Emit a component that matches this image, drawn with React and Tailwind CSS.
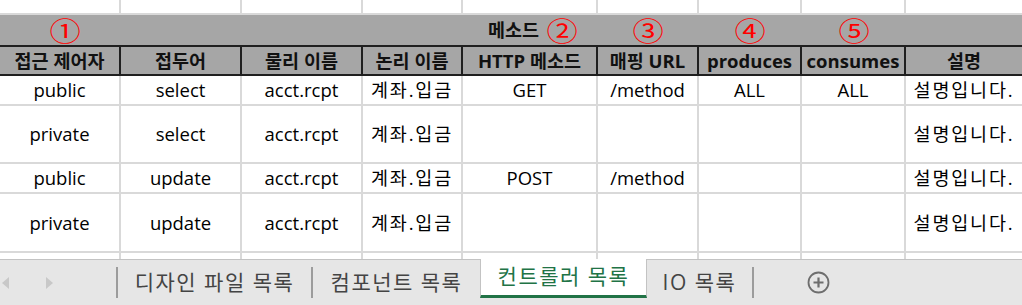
import React from "react";

// column widths follow the sheet's gridlines
const COLS = [
  "w-[121px]",
  "w-[121px]",
  "w-[121px]",
  "w-[100px]",
  "w-[135px]",
  "w-[101px]",
  "w-[103px]",
  "w-[104px]",
  "w-[118px]",
];

const HEADERS = [
  "접근 제어자",
  "접두어",
  "물리 이름",
  "논리 이름",
  "HTTP 메소드",
  "매핑 URL",
  "produces",
  "consumes",
  "설명",
];

const ROWS = [
  { h: "h-[30px]", cells: ["public", "select", "acct.rcpt", "계좌.입금", "GET", "/method", "ALL", "ALL", "설명입니다."] },
  { h: "h-[58px]", cells: ["private", "select", "acct.rcpt", "계좌.입금", "", "", "", "", "설명입니다."] },
  { h: "h-[30px]", cells: ["public", "update", "acct.rcpt", "계좌.입금", "POST", "/method", "", "", "설명입니다."] },
  { h: "h-[59px]", cells: ["private", "update", "acct.rcpt", "계좌.입금", "", "", "", "", "설명입니다."] },
];

const hasHangul = (s) => /[가-힣]/.test(s || "");

function Circled({ children, className = "" }) {
  return (
    <span
      className={`inline-block scale-x-[1.2] font-['Noto_Sans_CJK_KR',sans-serif] text-[26px] leading-none text-[#ff0000] ${className}`}
    >
      {children}
    </span>
  );
}

function GridRow({ h, cells }) {
  return (
    <div className={`flex ${h} border-b-2 border-[#d9d9d9]`}>
      {COLS.map((w, i) => {
        const text = cells ? cells[i] : "";
        return (
          <div
            key={i}
            className={`${w} shrink-0 flex items-center justify-center border-r-2 border-[#d9d9d9] whitespace-nowrap ${
              hasHangul(text) ? "tracking-[1.8px]" : ""
            }`}
          >
            {text}
          </div>
        );
      })}
    </div>
  );
}

function Separator() {
  return <div className="h-[31px] w-[2px] shrink-0 bg-[#9c9c9c]" />;
}

export default function App() {
  return (
    <div className="w-[1022px] h-[305px] overflow-hidden bg-white font-['Open_Sans','Noto_Sans_CJK_KR',sans-serif] text-[18.5px] text-black">
      {/* row above, cut off */}
      <GridRow h="h-[15px]" />

      {/* merged gray header with markers */}
      <div className="flex h-[30px] bg-[#a6a6a6]">
        {COLS.map((w, i) => (
          <div key={i} className={`${w} shrink-0 flex items-center justify-center`}>
            {i === 0 && <Circled className="ml-[10px]">①</Circled>}
            {i === 4 && (
              <div className="flex items-center gap-[10px] ml-[2px]">
                <span className="font-bold text-[#111]">메소드</span>
                <Circled>②</Circled>
              </div>
            )}
            {i === 5 && <Circled>③</Circled>}
            {i === 6 && <Circled>④</Circled>}
            {i === 7 && <Circled>⑤</Circled>}
          </div>
        ))}
      </div>

      {/* column titles */}
      <div className="flex h-[31px] bg-[#a6a6a6] border-y-2 border-[#1f1f1f]">
        {COLS.map((w, i) => (
          <div
            key={i}
            className={`${w} shrink-0 flex items-center justify-center border-r-2 border-[#1f1f1f] font-bold text-[#111] whitespace-nowrap`}
          >
            {HEADERS[i]}
          </div>
        ))}
      </div>

      {ROWS.map((r, i) => (
        <GridRow key={i} h={r.h} cells={r.cells} />
      ))}
      <div className="flex h-[6px]">
        {COLS.map((w, i) => (
          <div key={i} className={`${w} shrink-0 border-r-2 border-[#d9d9d9]`} />
        ))}
      </div>

      {/* sheet tabs */}
      <div className="flex h-[46px] bg-[#e6e6e6] font-['Open_Sans','Noto_Sans_CJK_KR',sans-serif] text-[21px] tracking-[1.5px] text-[#444]">
        <div className="flex w-[480px] shrink-0 items-center border-t border-[#c3c3c3]">
          <div className="flex w-[116px] shrink-0 items-center pl-[2px]">
            <svg width="7" height="12" viewBox="0 0 7 12">
              <polygon points="7,0 0,6 7,12" fill="#c8c8c8" />
            </svg>
            <svg className="ml-[37px]" width="7" height="12" viewBox="0 0 7 12">
              <polygon points="0,0 7,6 0,12" fill="#c8c8c8" />
            </svg>
          </div>
          <Separator />
          <div className="w-[193px] shrink-0 text-center whitespace-nowrap">디자인 파일 목록</div>
          <Separator />
          <div className="flex-1 text-center whitespace-nowrap">컴포넌트 목록</div>
        </div>

        <div className="flex h-[39px] w-[167px] shrink-0 items-center justify-center border-x border-[#c3c3c3] border-b-[3px] border-b-[#217346] bg-white text-[#217346] whitespace-nowrap">
          컨트롤러 목록
        </div>

        <div className="flex flex-1 items-center border-t border-[#c3c3c3]">
          <div className="w-[105px] shrink-0 text-center whitespace-nowrap">IO 목록</div>
          <Separator />
          <svg className="ml-[53px]" width="23" height="23" viewBox="0 0 23 23">
            <circle cx="11.5" cy="11.5" r="10" fill="none" stroke="#6e6e6e" strokeWidth="1.8" />
            <path d="M11.5 6.5v10M6.5 11.5h10" stroke="#6e6e6e" strokeWidth="2.2" />
          </svg>
        </div>
      </div>
    </div>
  );
}
